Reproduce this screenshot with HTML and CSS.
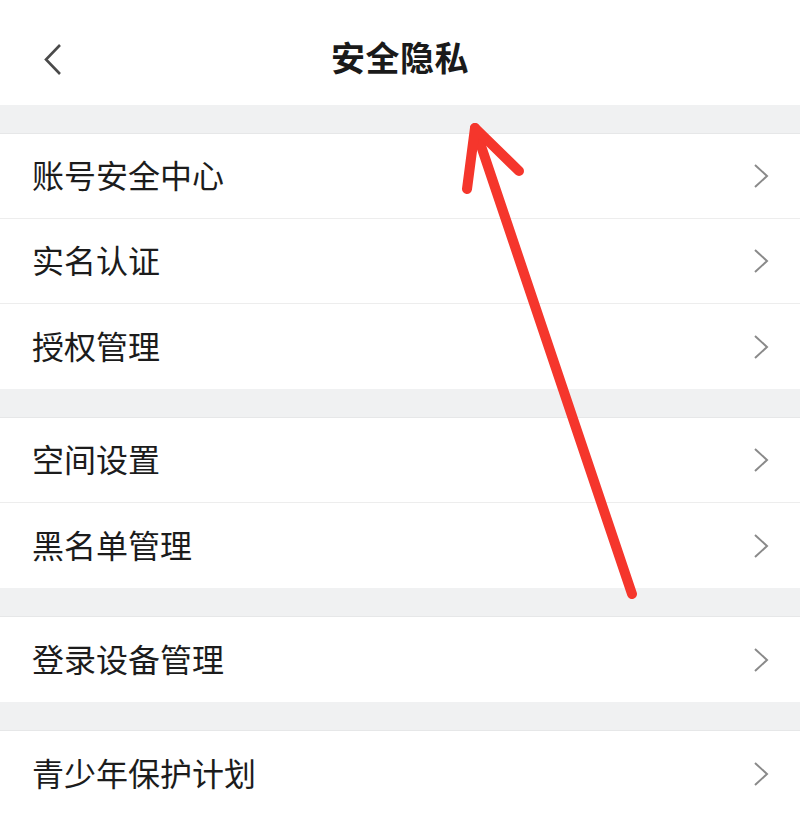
FILE: index.html
```html
<!DOCTYPE html>
<html lang="zh-CN">
<head>
<meta charset="utf-8">
<title>安全隐私</title>
<link rel="stylesheet" href="styles.css">
</head>
<body>
<div class="page">
  <header class="topbar">
    <span class="back">
      <svg width="30" height="40" viewBox="0 0 30 40"><polyline points="16,3 2,17.5 16,32" fill="none" stroke="#4a4a4a" stroke-width="2.6" stroke-linecap="butt" stroke-linejoin="miter"/></svg>
    </span>
    <h1 class="title">安全隐私</h1>
  </header>
  <div class="gap"></div>
  <ul class="group">
    <li class="row"><span class="label">账号安全中心</span><span class="chev"><svg width="16" height="26" viewBox="0 0 16 26"><polyline points="1,1 13,12 1,23" fill="none" stroke="#8a8a8a" stroke-width="2"/></svg></span></li>
    <li class="row"><span class="label">实名认证</span><span class="chev"><svg width="16" height="26" viewBox="0 0 16 26"><polyline points="1,1 13,12 1,23" fill="none" stroke="#8a8a8a" stroke-width="2"/></svg></span></li>
    <li class="row"><span class="label">授权管理</span><span class="chev"><svg width="16" height="26" viewBox="0 0 16 26"><polyline points="1,1 13,12 1,23" fill="none" stroke="#8a8a8a" stroke-width="2"/></svg></span></li>
  </ul>
  <div class="gap"></div>
  <ul class="group">
    <li class="row"><span class="label">空间设置</span><span class="chev"><svg width="16" height="26" viewBox="0 0 16 26"><polyline points="1,1 13,12 1,23" fill="none" stroke="#8a8a8a" stroke-width="2"/></svg></span></li>
    <li class="row"><span class="label">黑名单管理</span><span class="chev"><svg width="16" height="26" viewBox="0 0 16 26"><polyline points="1,1 13,12 1,23" fill="none" stroke="#8a8a8a" stroke-width="2"/></svg></span></li>
  </ul>
  <div class="gap"></div>
  <ul class="group">
    <li class="row"><span class="label">登录设备管理</span><span class="chev"><svg width="16" height="26" viewBox="0 0 16 26"><polyline points="1,1 13,12 1,23" fill="none" stroke="#8a8a8a" stroke-width="2"/></svg></span></li>
  </ul>
  <div class="gap"></div>
  <ul class="group">
    <li class="row"><span class="label">青少年保护计划</span><span class="chev"><svg width="16" height="26" viewBox="0 0 16 26"><polyline points="1,1 13,12 1,23" fill="none" stroke="#8a8a8a" stroke-width="2"/></svg></span></li>
  </ul>
  <svg class="annot" width="800" height="814" viewBox="0 0 800 814">
    <g fill="none" stroke="#f5362c" stroke-width="10" stroke-linecap="round" stroke-linejoin="round">
      <line x1="632" y1="594" x2="475" y2="128"/>
      <polyline points="467,189 475,128 519,171"/>
    </g>
  </svg>
</div>
</body>
</html>
```

FILE: styles.css
```css
* { box-sizing: border-box; }
html, body { margin: 0; padding: 0; background: #ffffff; }
body {
  font-family: "Noto Sans CJK SC", "Noto Sans", sans-serif;
  color: #1c1c1c;
}
.page {
  position: relative;
  width: 800px;
  height: 814px;
  overflow: hidden;
  background: #ffffff;
}
.topbar {
  height: 105px;
  display: flex;
  align-items: center;
  justify-content: center;
  position: relative;
  background: #ffffff;
}
.back {
  position: absolute;
  left: 44px;
  top: 42px;
  display: flex;
}
.title {
  margin: 8px 0 0 0;
  font-size: 34px;
  font-weight: 700;
  color: #1a1a1a;
  letter-spacing: 0.5px;
  line-height: 1;
}
.gap {
  height: 29px;
  background: #f0f1f2;
  border-bottom: 1px solid #e6e7e8;
}
.group {
  list-style: none;
  margin: 0;
  padding: 0;
  background: #ffffff;
}
.row {
  height: 85px;
  display: flex;
  align-items: center;
  justify-content: space-between;
  padding: 0 30px 0 32px;
  border-bottom: 1px solid #ededed;
}
.row:last-child { border-bottom: none; }
.label {
  font-size: 32px;
  line-height: 1;
  color: #1c1c1c;
  margin-top: -4px;
}
.chev {
  display: flex;
  margin-top: 2px;
}
.annot {
  position: absolute;
  left: 0;
  top: 0;
  pointer-events: none;
}
```
